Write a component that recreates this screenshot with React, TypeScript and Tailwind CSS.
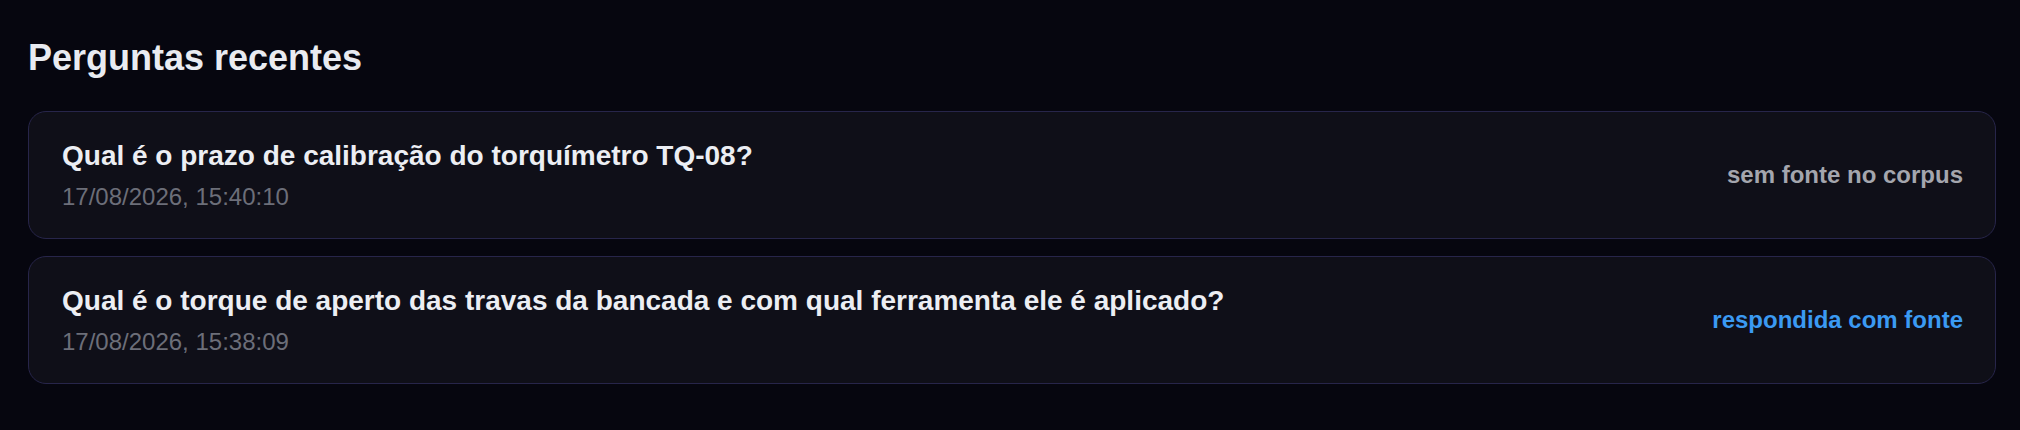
const questions = [
  {
    text: 'Qual é o prazo de calibração do torquímetro TQ-08?',
    date: '17/08/2026, 15:40:10',
    status: 'sem fonte no corpus',
    answered: false,
  },
  {
    text: 'Qual é o torque de aperto das travas da bancada e com qual ferramenta ele é aplicado?',
    date: '17/08/2026, 15:38:09',
    status: 'respondida com fonte',
    answered: true,
  },
];

export default function App() {
  return (
    <div className="min-h-[430px] w-full bg-[#06060f] pl-[28px] pr-[24px] pt-[38px] font-['Liberation_Sans',Arial,sans-serif]">
      <h2 className="mb-[33px] text-[36px] font-bold leading-[40px] text-[#e9ebf1]">Perguntas recentes</h2>
      <div className="flex flex-col gap-[17px]">
        {questions.map((q) => (
          <div
            key={q.date}
            className="flex h-[128px] items-center justify-between rounded-[18px] border-[1.5px] border-[#27254a] bg-[#0f0f18] pl-[33px] pr-[32px]"
          >
            <div className="flex flex-col">
              <span className="text-[28px] font-bold leading-[38px] text-[#eceef3]">{q.text}</span>
              <span className="mt-[5px] text-[24px] leading-[34px] text-[#6c6e79]">{q.date}</span>
            </div>
            <span
              className={`text-[24px] font-bold leading-[34px] ${q.answered ? 'text-[#3b9af2]' : 'text-[#a4a6ae]'}`}
            >
              {q.status}
            </span>
          </div>
        ))}
      </div>
    </div>
  );
}
